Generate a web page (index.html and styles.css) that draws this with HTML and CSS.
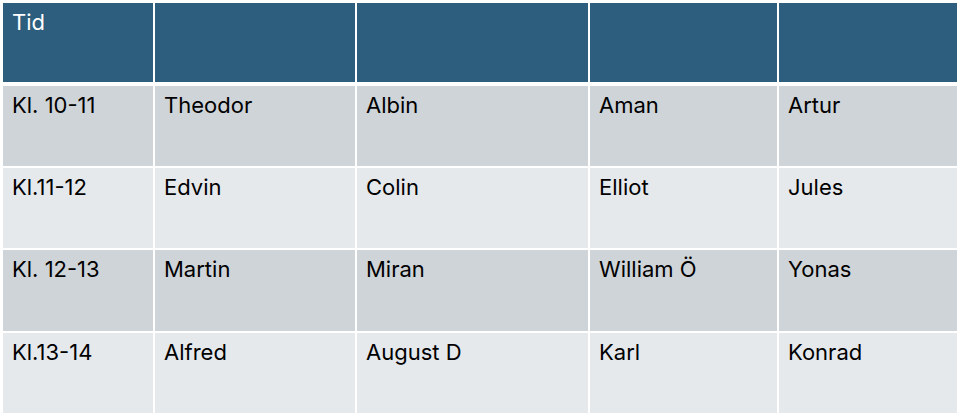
FILE: index.html
```html
<!DOCTYPE html>
<html lang="sv">
<head>
<meta charset="utf-8">
<title>Schema</title>
<link rel="stylesheet" href="styles.css">
</head>
<body>
<div class="table">
  <div class="cell head">Tid</div>
  <div class="cell head"></div>
  <div class="cell head"></div>
  <div class="cell head"></div>
  <div class="cell head"></div>

  <div class="cell odd">Kl. 10-11</div>
  <div class="cell odd">Theodor</div>
  <div class="cell odd">Albin</div>
  <div class="cell odd">Aman</div>
  <div class="cell odd">Artur</div>

  <div class="cell even">Kl.11-12</div>
  <div class="cell even">Edvin</div>
  <div class="cell even">Colin</div>
  <div class="cell even">Elliot</div>
  <div class="cell even">Jules</div>

  <div class="cell odd">Kl. 12-13</div>
  <div class="cell odd">Martin</div>
  <div class="cell odd">Miran</div>
  <div class="cell odd">William Ö</div>
  <div class="cell odd">Yonas</div>

  <div class="cell even">Kl.13-14</div>
  <div class="cell even">Alfred</div>
  <div class="cell even">August D</div>
  <div class="cell even">Karl</div>
  <div class="cell even">Konrad</div>
</div>
</body>
</html>
```
FILE: styles.css
```css
html, body {
  margin: 0;
  padding: 0;
  background: #ffffff;
}
body {
  padding: 3px;
  font-family: Inter, "Noto Sans", sans-serif;
}
.table {
  display: grid;
  grid-template-columns: 150px 200px 231px 187px 178px;
  grid-template-rows: 81px 80px 80px 81px 80px;
  column-gap: 2px;
  row-gap: 2px;
  width: 954px;
}
.cell {
  padding: 5px 9px;
  font-size: 22px;
  font-weight: 400;
  line-height: 28px;
  color: #000000;
}
.head {
  background: #2d5e7e;
  color: #ffffff;
  margin-bottom: 2px;
  padding: 5px 9px;
}
.odd {
  background: #cfd4d8;
}
.even {
  background: #e6e9ec;
}
```
